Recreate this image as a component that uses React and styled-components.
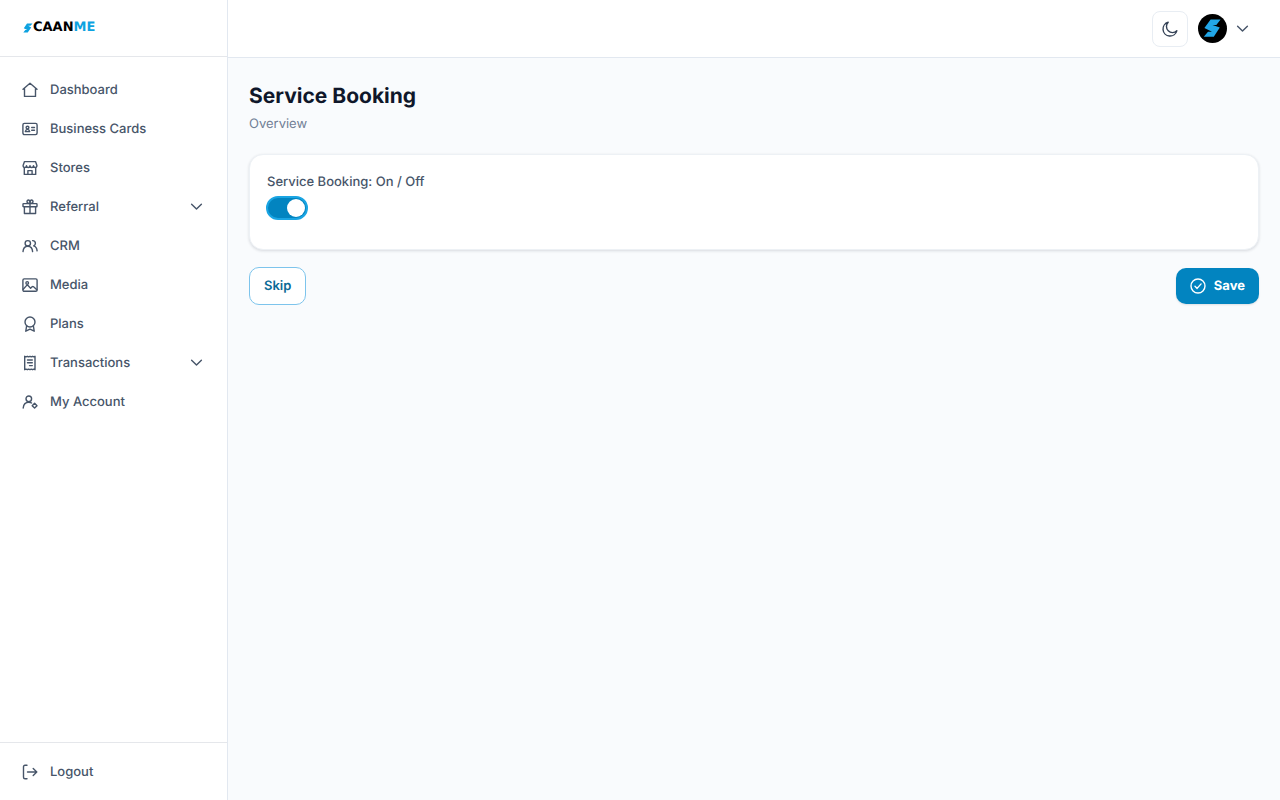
import React, { useState } from 'react';
import styled, { createGlobalStyle } from 'styled-components';

const GlobalStyle = createGlobalStyle`
  * {
    box-sizing: border-box;
  }
  body {
    margin: 0;
    background: #f9fbfd;
    color: #475569;
    font-family: Inter, sans-serif;
    font-size: 13px;
    line-height: 20px;
    text-rendering: geometricPrecision;
  }
  button {
    font: inherit;
    color: inherit;
    text-rendering: inherit;
    cursor: pointer;
  }
`;

const Page = styled.div`
  display: flex;
  min-height: 100vh;
`;
const Sidebar = styled.aside`
  width: 228px;
  flex-shrink: 0;
  display: flex;
  flex-direction: column;
  background: #ffffff;
  border-right: 1px solid #e2e8f0;
`;
const Brand = styled.a`
  height: 57px;
  padding: 0 23px;
  display: flex;
  align-items: center;
  border-bottom: 1px solid #e5e7eb;
  color: #000000;
  font-family: 'DejaVu Sans', sans-serif;
  font-size: 13px;
  font-weight: 700;
  line-height: 22px;
  text-decoration: none;
`;
const BrandAccent = styled.span`
  color: #0da2e0;
`;
const Nav = styled.nav`
  flex: 1;
  padding: 13px 12px;
`;
const NavFooter = styled.div`
  padding: 9px 12px;
  border-top: 1px solid #e5e7eb;
`;
const NavLink = styled.a`
  height: 39px;
  padding: 0 12px 0 10px;
  display: flex;
  align-items: center;
  gap: 12px;
  color: #475569;
  font-weight: 500;
  text-decoration: none;
`;
const NavButton = styled(NavLink)`
  width: 100%;
  border: 0;
  background: none;
  text-align: left;
`;
const NavLabel = styled.span`
  flex: 1;
`;
const Icon = styled.svg`
  width: ${(props) => props.$size || 16}px;
  height: ${(props) => props.$size || 16}px;
  flex-shrink: 0;
  fill: none;
  stroke: currentColor;
  stroke-width: 1.4;
  stroke-linecap: round;
  stroke-linejoin: round;
`;
const Content = styled.div`
  flex: 1;
  min-width: 0;
`;
const TopBar = styled.header`
  height: 58px;
  padding: 0 31px;
  display: flex;
  align-items: center;
  justify-content: flex-end;
  gap: 10px;
  background: #ffffff;
  border-bottom: 1px solid #e2e8f0;
`;
const ThemeButton = styled.button`
  width: 36px;
  height: 36px;
  padding: 0;
  display: flex;
  align-items: center;
  justify-content: center;
  background: #ffffff;
  border: 1px solid #e8edf3;
  border-radius: 8px;
  color: #334155;
`;
const ProfileButton = styled.button`
  padding: 0;
  display: flex;
  align-items: center;
  gap: 9px;
  background: none;
  border: 0;
`;
const Avatar = styled.svg`
  width: 29px;
  height: 29px;
`;
const Main = styled.main`
  padding: 24px 21px;
`;
const Title = styled.h1`
  margin: 0;
  color: #0f172a;
  font-size: 21px;
  font-weight: 700;
  line-height: 30px;
`;
const Subtitle = styled.p`
  margin: 2px 0 20px;
  color: #718096;
`;
const Card = styled.section`
  min-height: 96px;
  padding: 17px 16px;
  background: #ffffff;
  border: 1px solid #edf1f5;
  border-radius: 14px;
  box-shadow: 0 1px 3px rgba(15, 23, 42, 0.14);
`;
const SwitchLabel = styled.label`
  display: flex;
  flex-direction: column;
  gap: 4px;
  width: fit-content;
  color: #475569;
  font-weight: 500;
`;
const SwitchText = styled.span`
  padding-left: 1px;
`;
const Switch = styled.input`
  appearance: none;
  width: 42px;
  height: 24px;
  margin: 0;
  padding: 1px;
  display: flex;
  align-items: center;
  background: #94a3b8;
  border: 2px solid #cbd5e1;
  border-radius: 12px;
  cursor: pointer;
  &::before {
    content: '';
    width: 18px;
    height: 18px;
    border-radius: 50%;
    background: #ffffff;
  }
  &:checked {
    justify-content: flex-end;
    background: #0284c0;
    border-color: #1aa5e3;
  }
`;
const Actions = styled.div`
  margin-top: 17px;
  display: flex;
  align-items: center;
  justify-content: space-between;
`;
const SkipButton = styled.button`
  height: 38px;
  padding: 0 14px;
  background: #ffffff;
  border: 1px solid #7dc4ec;
  border-radius: 10px;
  color: #0b6a96;
  font-weight: 600;
`;
const SaveButton = styled.button`
  height: 36px;
  padding: 0 14px;
  display: flex;
  align-items: center;
  gap: 8px;
  background: #0284c0;
  border: 0;
  border-radius: 10px;
  box-shadow: 0 1px 2px rgba(15, 23, 42, 0.12);
  color: #ffffff;
  font-weight: 700;
`;

const iconShapes = {
  home: <path d='M1 7.200 8 1.200l7 6M2.500 6.200v8.200h11V6.200' />,
  cards: (
    <>
      <rect x='.9' y='2.400' width='14.200' height='11.200' rx='1.500' />
      <circle cx='5.500' cy='6.600' r='1.400' />
      <path d='M3.300 10.600c.3-1.400 1.100-2.200 2.200-2.200s1.900.8 2.200 2.200zM9.700 6.500h2.800M9.700 9.300h2.800' />
    </>
  ),
  store: (
    <>
      <path d='M2.500 1.600h11l1.400 3.800c.1 1.300-.7 2.100-1.700 2.100s-1.700-.8-1.700-1.900c0 1.100-.8 1.900-1.800 1.900S8 6.700 8 5.600c0 1.100-.7 1.900-1.700 1.900s-1.800-.8-1.800-1.900c0 1.100-.7 1.900-1.700 1.900S1 6.700 1.100 5.400z' />
      <path d='M2.300 7.600v6.800h11.400V7.600M5.900 14.200v-3.600h4.200v3.600' />
    </>
  ),
  gift: (
    <>
      <rect x='1' y='4.600' width='14' height='3.200' rx='.6' />
      <path d='M2.400 7.800v6.700h11.200V7.800M8 4.600v9.900M8 4.500C6.300 4.500 5 3.900 5 2.600 5 1.600 5.600 1 6.400 1 7.400 1 8 2.300 8 4.500zM8 4.500c1.700 0 3-.6 3-1.900C11 1.600 10.400 1 9.600 1 8.600 1 8 2.300 8 4.500z' />
    </>
  ),
  users: (
    <>
      <circle cx='5.800' cy='5.300' r='2.700' />
      <path d='M1 13.600c.2-3.300 2.100-5.400 4.800-5.400s4.600 2.100 4.800 5.400M10.600 2.600c1.800.1 2.800 1.200 2.800 2.700 0 1.200-.7 2.100-1.700 2.600 2 .6 3.200 2.500 3.400 5' />
    </>
  ),
  image: (
    <>
      <rect x='.9' y='1.900' width='14.200' height='12.400' rx='1.300' />
      <circle cx='5.200' cy='5.900' r='1.300' />
      <path d='m1.200 12.200 3.300-3.600c.5-.5 1-.5 1.500 0l2.600 2.700 1.500-1.500c.5-.5 1-.5 1.500 0l3.200 2.900' />
    </>
  ),
  award: (
    <>
      <circle cx='8' cy='6' r='5' />
      <path d='M4.600 10 3.800 15.200 8 13.100l4.200 2.100-.8-5.200' />
    </>
  ),
  receipt: (
    <>
      <path d='M2.700 1.300 4 1.900l1.300-.6 1.300.6L8 1.300l1.300.6 1.300-.6 1.300.6 1.100-.6v13.400l-1.100-.6-1.300.6-1.300-.6-1.300.6-1.400-.6-1.300.6-1.300-.6-1.300.6z' />
      <path d='M5.500 5h4.800M5.500 7.800h4.800M7.500 10.600h2.800' />
    </>
  ),
  account: (
    <>
      <circle cx='6.800' cy='4.800' r='2.800' />
      <path d='M1.200 14c.4-3.600 2.500-5.700 5.600-5.700 1.100 0 2 .2 2.800.7' />
      <path d='m12.600 9.300 2.400 2.400-2.400 2.400-2.400-2.400z' />
    </>
  ),
  logout: <path d='M5 1.300H3C2 1.300 1.500 1.800 1.500 2.800v10.400c0 1 .5 1.500 1.500 1.500h2M5.500 8h9.300M11.200 4.400 14.800 8l-3.600 3.600' />,
  chevron: <path d='m1.600 4.200 4.900 4.900 4.900-4.900' />,
  moon: <path d='M6.200 1.300A7 7 0 1 0 14.800 9.800 5.400 5.400 0 0 1 6.200 1.300z' />,
  check: (
    <>
      <circle cx='8' cy='8' r='7' />
      <path d='m5 8.300 2.100 2.100 4-4.500' />
    </>
  ),
};

const SvgIcon = ({ name, size }) => (
  <Icon $size={size} viewBox={`0 0 ${size || 16} ${size || 16}`} aria-hidden='true'>
    {iconShapes[name]}
  </Icon>
);

const navItems = [
  { label: 'Dashboard', icon: 'home' },
  { label: 'Business Cards', icon: 'cards' },
  { label: 'Stores', icon: 'store' },
  { label: 'Referral', icon: 'gift', hasMenu: true },
  { label: 'CRM', icon: 'users' },
  { label: 'Media', icon: 'image' },
  { label: 'Plans', icon: 'award' },
  { label: 'Transactions', icon: 'receipt', hasMenu: true },
  { label: 'My Account', icon: 'account' },
];

const App = () => {
  const [bookingOn, setBookingOn] = useState(true);

  return (
    <Page>
      <GlobalStyle />
      <Sidebar>
        <Brand href='#'>
          <svg width='10' height='10' viewBox='0 0 10 10' aria-hidden='true'>
            <path
              d='M4 .5h5.500L7.500 2.800H5.200l3 1.700-3.500 5H.3l2-2.400h2L.8 5.200z'
              fill='#0da2e0'
            />
          </svg>
          CAAN<BrandAccent>ME</BrandAccent>
        </Brand>
        <Nav>
          {navItems.map((item) =>
            item.hasMenu ? (
              <NavButton as='button' type='button' key={item.label}>
                <SvgIcon name={item.icon} />
                <NavLabel>{item.label}</NavLabel>
                <SvgIcon name='chevron' size={13} />
              </NavButton>
            ) : (
              <NavLink href='#' key={item.label}>
                <SvgIcon name={item.icon} />
                <NavLabel>{item.label}</NavLabel>
              </NavLink>
            )
          )}
        </Nav>
        <NavFooter>
          <NavLink href='#'>
            <SvgIcon name='logout' />
            <NavLabel>Logout</NavLabel>
          </NavLink>
        </NavFooter>
      </Sidebar>
      <Content>
        <TopBar>
          <ThemeButton type='button' aria-label='Dark mode'>
            <SvgIcon name='moon' />
          </ThemeButton>
          <ProfileButton type='button' aria-label='Profile'>
            <Avatar viewBox='0 0 29 29' aria-hidden='true'>
              <circle cx='14.500' cy='14.500' r='14.500' fill='#000000' />
              <path
                d='M12.600 5.600H22.600L18.300 10.900H14.500L21.800 13.600 15.800 22.700H5.800L10 17.700H14L6.400 14z'
                fill='#22a7e8'
              />
            </Avatar>
            <SvgIcon name='chevron' size={13} />
          </ProfileButton>
        </TopBar>
        <Main>
          <Title>Service Booking</Title>
          <Subtitle>Overview</Subtitle>
          <Card>
            <SwitchLabel>
              <SwitchText>Service Booking: On / Off</SwitchText>
              <Switch
                type='checkbox'
                role='switch'
                checked={bookingOn}
                onChange={(e) => setBookingOn(e.target.checked)}
              />
            </SwitchLabel>
          </Card>
          <Actions>
            <SkipButton type='button'>Skip</SkipButton>
            <SaveButton type='button'>
              <SvgIcon name='check' />
              Save
            </SaveButton>
          </Actions>
        </Main>
      </Content>
    </Page>
  );
};

export default App;
